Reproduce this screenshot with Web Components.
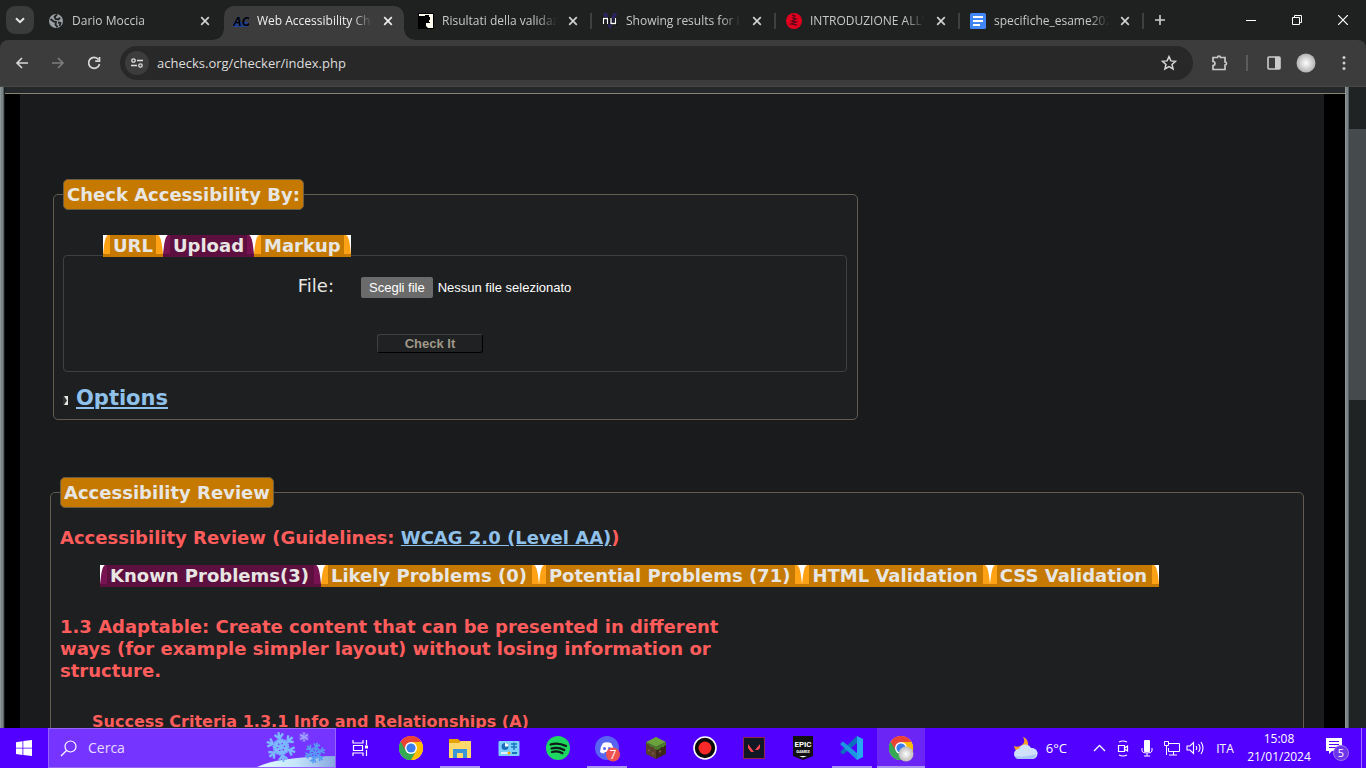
<!DOCTYPE html>
<html lang="it">
<head>
<meta charset="utf-8">
<title>Web Accessibility Checker</title>
<style>
html,body{margin:0;height:100%;overflow:hidden;background:#1a1b1c}
body{display:flex;flex-direction:column;font-family:"Open Sans","Noto Sans",sans-serif}
site-view{flex:1;min-height:0}
</style>
</head>
<body>
<browser-chrome></browser-chrome>
<site-view></site-view>
<task-bar></task-bar>

<script>
function define(name, html) {
  const t = document.createElement('template');
  t.innerHTML = html;
  customElements.define(name, class extends HTMLElement {
    constructor() {
      super();
      this.attachShadow({mode: 'open'}).append(t.content.cloneNode(true));
    }
  });
}

define('browser-tab', `
<style>
:host{display:flex;align-items:center;box-sizing:border-box;flex:0 1 184px;height:40px;padding:1px 11px 0 8px;color:#c7c9c9;font-size:12px;min-width:0}
a{flex:1;min-width:0;display:flex;align-items:center;gap:8px;color:inherit;text-decoration:none}
.t{flex:1;min-width:0;overflow:hidden;white-space:nowrap;line-height:18px;-webkit-mask-image:linear-gradient(90deg,#000 calc(100% - 20px),transparent);mask-image:linear-gradient(90deg,#000 calc(100% - 20px),transparent)}
::slotted(svg){width:16px;height:16px;flex:none;display:block}
button{border:0;background:none;padding:0;width:16px;height:16px;margin-left:8px;color:#d0d0d0;display:grid;place-items:center}
i{width:2px;height:16px;background:#3f4141;margin:0 -11px 0 9px}
:host(:not([sep])) i{visibility:hidden}
:host([sep]){padding-left:10px}
:host([active]){background:#3c3c3c;color:#e6e6e6;border-radius:10px 10px 0 0;height:34px;align-self:flex-end;flex-basis:180px;padding:0 8px 5px 9px;margin-right:4px;position:relative}
:host([active]) .t,:host([active]) button{color:#eee}
:host([active])::before,:host([active])::after{content:"";position:absolute;bottom:0;width:10px;height:10px}
:host([active])::before{left:-10px;background:radial-gradient(circle at 0 0,transparent 9px,#3c3c3c 10px)}
:host([active])::after{right:-10px;background:radial-gradient(circle at 100% 0,transparent 9px,#3c3c3c 10px)}
</style>
<a href="#"><slot name="icon"></slot><span class="t"><slot></slot></span></a>
<button aria-label="Chiudi scheda"><svg width="10" height="10" viewBox="0 0 10 10"><path d="M1.2 1.2l7.6 7.6M8.8 1.2L1.200 8.800" stroke="currentColor" stroke-width="1.7"/></svg></button><i></i>`);

define('browser-chrome', `
<style>
:host{display:block;background:#1f2120;color:#d5d5d5}
.strip{display:flex;height:40px;align-items:center}
.menu{width:28px;height:28px;margin:0 6px;border:0;border-radius:9px;background:#3a3b3b;padding:0;display:grid;place-items:center;flex:none}
.tabs{display:flex;flex:0 1 1106px;min-width:0;height:40px;align-items:center}
.plain{border:0;background:none;padding:0;display:grid;place-items:center;width:28px;height:28px;flex:none}
.win{margin-left:auto;display:flex}
.win .plain{width:46px;height:40px}
.bar{display:flex;align-items:center;background:#3c3c3c;height:46px;border-bottom:1px solid #484848;border-radius:8px 8px 0 0;padding:0 4px 0 8px}
.nav{display:flex;gap:8px}
form{flex:1;display:flex;align-items:center;background:#282828;border-radius:17px;height:34px;margin:0 12px;padding:0 10px 0 5px}
.site{background:#3c3c3c;border-radius:50%;width:24px;height:24px}
.url{position:relative;flex:1;margin-left:8px;font-size:13px;line-height:20px;white-space:nowrap}
.url input{all:unset;display:block;width:100%;color:#dedede}
hr{width:2px;height:16px;background:#5b5b5b;border:0;margin:0 12px}
.ext{display:flex;align-items:center;margin-left:1px}
.ext .w{width:36px}
.ext .w+.w{margin-left:2px}
</style>
<div class="strip">
<button class="menu" aria-label="Cerca schede"><svg width="10" height="7"><path d="M1 1.200l4 4 4-4" fill="none" stroke="#e6e6e6" stroke-width="2"/></svg></button>
<div class="tabs">
<browser-tab><svg slot="icon" viewBox="0 0 16 16"><circle cx="8" cy="8" r="7" fill="#9aa0a6"/><path d="M2.500 6l3 2.500 2.500.5-.5 2.500 2 2.800M9 1.500L6.500 4l1 2 3 .500 1.500-2M10 9.500l2.500.5-1 3" fill="none" stroke="#202222" stroke-width="1.800"/></svg>Dario Moccia</browser-tab>
<browser-tab active><svg slot="icon" viewBox="0 0 16 16"><rect x="0" y="9" width="15" height="5" fill="#23418f"/><text x="0" y="13" font-family="Liberation Sans" font-size="12" font-weight="700" font-style="italic" stroke="#1f3c8c" stroke-width=".5" paint-order="stroke">AC</text></svg>Web Accessibility Checker</browser-tab>
<browser-tab sep><svg slot="icon" viewBox="0 0 16 16"><path d="M0 0h16v16H0z"/><path d="M1 1h14v14h-5l-2-2V10h4V9h-1V7h1V4h-1V2H7v2H5V3H1z" fill="#fffdf0"/><path d="M4 3h3v2h3v3H8v2H4z"/></svg>Risultati della validazione</browser-tab>
<browser-tab sep><svg slot="icon" viewBox="0 0 16 16"><path d="M1 0h4l3 10 3-10h4l-5 13-2 3-2-3z" fill="#29245e"/><path d="M1.500 11V5.500h4V11M9 5v5.500h4.500V5" fill="none" stroke="#000" stroke-width="3"/><path d="M1.500 11V5.500h4V11M9 5v5.500h4.500V5" fill="none" stroke="#fff" stroke-width="1.300"/></svg>Showing results for index</browser-tab>
<browser-tab sep><svg slot="icon" viewBox="0 0 16 16"><circle cx="8" cy="8" r="8" fill="#e2001f"/><path d="M6 2l3 1-2 2 3 1-4 2 4 1-5 2 6 1" fill="none" stroke="#610817" stroke-width="1.400"/></svg>INTRODUZIONE ALL'INFORMATICA</browser-tab>
<browser-tab sep><svg slot="icon" viewBox="0 0 16 16"><rect width="16" height="16" rx="1.500" fill="#4285f4"/><path d="M3 4h10M3 8h10M3 12h7" stroke="#fff" stroke-width="1.800"/></svg>specifiche_esame2023_24</browser-tab>
</div>
<button class="plain" aria-label="Nuova scheda"><svg width="12" height="12"><path d="M6 1v10M1 6h10" stroke="#d0d0d0" stroke-width="1.600"/></svg></button>
<div class="win">
<button class="plain" aria-label="Riduci"><svg width="10" height="10"><path d="M0 5.500h10" stroke="#fff"/></svg></button>
<button class="plain" aria-label="Ripristina"><svg width="10" height="10"><path d="M.5 2.500h7v7h-7zM2.500 2V.5h7v7H8" fill="none" stroke="#fff"/></svg></button>
<button class="plain" aria-label="Chiudi"><svg width="10" height="10"><path d="M0 0l10 10M10 0L0 10" stroke="#fff" stroke-width="1.200"/></svg></button>
</div>
</div>
<div class="bar">
<div class="nav">
<button class="plain" aria-label="Indietro"><svg width="14" height="14"><path d="M13 7H2M7 2L2 7l5 5" fill="none" stroke="#d8d8d8" stroke-width="1.600"/></svg></button>
<button class="plain" aria-label="Avanti"><svg width="14" height="14"><path d="M1 7h11M7 2l5 5-5 5" fill="none" stroke="#7d7d7d" stroke-width="1.600"/></svg></button>
<button class="plain" aria-label="Ricarica"><svg width="14" height="14"><path d="M11.500 3.500A5.500 5.500 0 1 0 12.500 8M12.500 1v4.200H8.200" fill="none" stroke="#d8d8d8" stroke-width="1.700"/></svg></button>
</div>
<form>
<button type="button" class="plain site" aria-label="Informazioni sul sito"><svg width="12" height="10"><path d="M6 2.500h6M0 7.500h6" stroke="#ddd" stroke-width="1.500"/><circle cx="2.500" cy="2.500" r="1.700" fill="none" stroke="#ddd" stroke-width="1.300"/><circle cx="9.500" cy="7.500" r="1.700" fill="none" stroke="#ddd" stroke-width="1.300"/></svg></button>
<div class="url"><input aria-label="Indirizzo" value="achecks.org/checker/index.php"></div>
<button type="button" class="plain" aria-label="Preferiti"><svg width="16" height="16"><path d="M8 1.600l1.900 4.300 4.600.4-3.500 3.100 1.100 4.600L8 11.600 3.900 14 5 9.400 1.500 6.300l4.600-.4z" fill="none" stroke="#d5d5d5" stroke-width="1.500"/></svg></button>
</form>
<div class="ext">
<button class="plain" aria-label="Estensioni"><svg width="18" height="18"><path d="M2 3.500h4.500C6.500 1.500 9.500 1.500 9.500 3.500H14V8c2 0 2 3 0 3v4.500H2v-4c2.600 0 2.600-4 0-4z" fill="none" stroke="#c9c9c9" stroke-width="1.700"/></svg></button>
<hr>
<button class="plain" aria-label="Riquadro laterale"><svg width="14" height="14"><rect x="1" y="1" width="12" height="12" rx="1" fill="none" stroke="#ccc" stroke-width="1.600"/><path d="M8 1h5v12H8z" fill="#ccc"/></svg></button>
<button class="plain w" aria-label="Profilo"><svg width="20" height="20"><defs><radialGradient id="p"><stop offset="0" stop-color="#fff"/><stop offset="1" stop-color="#b2b2b2"/></radialGradient></defs><circle cx="10" cy="10" r="9.500" fill="url(#p)"/></svg></button>
<button class="plain w" aria-label="Menu"><svg width="4" height="16"><g fill="#ccc"><circle cx="2" cy="2.500" r="1.500"/><circle cx="2" cy="8" r="1.500"/><circle cx="2" cy="13.500" r="1.500"/></g></svg></button>
</div>
</div>`);

define('folder-tab', `
<style>
:host{--base:#c57900;--edge:#ffa114;display:block;height:22px;background:var(--base);position:relative}
:host([active]){--base:#5d0f40;--edge:#771350}
a{display:block;padding:0 var(--tab-end,10px) 0 10px;font:bold 18px/22px "DejaVu Sans",sans-serif;color:#e8e6e3;text-decoration:none;white-space:nowrap}
svg{position:absolute;top:0;width:7px;height:19px}
.l{left:0}.r{right:0;transform:scaleX(-1)}
.e{fill:var(--edge)}
</style>
<svg class="l" viewBox="0 0 7 19"><path d="M0 0h7v19H0z" fill="#fff"/><path class="e" d="M0 19C1 10 2 1 5 0h2v19z"/></svg>
<svg class="r" viewBox="0 0 7 19"><path d="M0 0h7v19H0z" fill="#fff"/><path class="e" d="M0 19C1 10 2 1 5 0h2v19z"/></svg>
<a href="#"><slot></slot></a>`);

define('field-group', `
<style>
:host{display:block}
fieldset{margin:0;min-width:0;border:1px solid #625b50;border-radius:5px;background:#1e1f21;padding:0 10px 8px 9px}
legend{box-sizing:border-box;height:31px;padding:0 3px;border:1px solid #6b5d45;border-radius:5px;background:#c57900;color:#e8e6e3;font:bold 18px/30px "DejaVu Sans",sans-serif}
</style>
<fieldset><legend><slot name="title"></slot></legend><slot></slot></fieldset>`);

define('upload-form', `
<style>
:host{display:block}
nav{display:flex;padding:25px 0 0 40px;margin-bottom:-2px;position:relative;z-index:1}
form{border:1px solid #3d4145;border-radius:4px;display:grid;grid-template-columns:270px 1fr;column-gap:27px;row-gap:36px;padding:21px 0 18px;align-items:center}
.lab{justify-self:end;font:18px/22px "DejaVu Sans",sans-serif;color:#e8e6e3;align-self:start;margin-top:-2px}
.file{display:flex;align-items:center;gap:5px;font:13px/21px "Liberation Sans",sans-serif;color:#fff;position:relative}
.file input{position:absolute;opacity:0;width:1px;height:1px}
.file label{background:#6b6b6b;border-radius:2px;padding:0 8px}
button{grid-column:2;margin-left:16px;justify-self:start;box-sizing:border-box;width:106px;height:19px;padding:0;border:1px solid;border-color:#3d4145 #000 #000 #3d4145;border-radius:3px;background:#1f2123;color:#a09889;font:bold 13px/15px "Liberation Sans",sans-serif}
.opt{display:flex;align-items:center;gap:8px;margin-top:13px}
.opt a{font:bold 21px/26px "DejaVu Sans",sans-serif;color:#8fc1ea}
.opt svg{margin-top:5px}
</style>
<nav><folder-tab>URL</folder-tab><folder-tab active>Upload</folder-tab><folder-tab>Markup</folder-tab></nav>
<form>
<label class="lab" for="f">File:</label>
<div class="file"><input id="f" type="file"><label for="f">Scegli file</label><span>Nessun file selezionato</span></div>
<button type="button">Check It</button>
</form>
<div class="opt"><svg width="5" height="9"><path d="M0 0h5v9H0z" fill="#e8e6e3"/><path d="M0 0h1l3 4.500L1 9H0z" fill="#333"/></svg><a href="#">Options</a></div>`);

define('review-panel', `
<style>
:host{display:block;font-family:"DejaVu Sans",sans-serif;color:#ff5c5c;--tab-end:12px}
h2,h3,h4{margin:0;font-size:18px;line-height:22px}
h2{margin-top:19px}
h2 a{color:#8fc1ea}
nav{display:flex;margin:16px 0 29px 40px}
h3{max-width:680px}
h4{font-size:16px;margin:29px 0 60px 32px}
</style>
<h2>Accessibility Review (Guidelines: <a href="#">WCAG 2.0 (Level AA)</a>)</h2>
<nav><folder-tab active>Known Problems(3)</folder-tab><folder-tab>Likely Problems (0)</folder-tab><folder-tab>Potential Problems (71)</folder-tab><folder-tab>HTML Validation</folder-tab><folder-tab>CSS Validation</folder-tab></nav>
<h3>1.3 Adaptable: Create content that can be presented in different ways (for example simpler layout) without losing information or structure.</h3>
<h4>Success Criteria 1.3.1 Info and Relationships (A)</h4>`);

define('site-view', `
<style>
:host{display:flex;overflow:hidden;background:#1a1b1c}
.edge{width:4px;flex:none;background:linear-gradient(90deg,#8b9496 0 1px,#7b8587 1px 3px,#536064 3px)}
.page{flex:1;min-width:0;background:#000;margin-left:1px}
.head{height:6px;background:#24282b;border-bottom:1px solid #8a8376}
main{background:#1a1b1c;margin:0 21px 0 15px;padding:85px 20px 0 30px}
.check{width:64.2%;margin:0 0 57px 3px}
.scroll{width:17px;flex:none;background:#202324;display:grid;grid-template-rows:42px 271px 1fr}
.scroll i{grid-row:2;background:#454a4c}
</style>
<div class="edge"></div>
<div class="page"><div class="head"></div>
<main>
<field-group class="check"><span slot="title">Check Accessibility By:</span><upload-form></upload-form></field-group>
<field-group><span slot="title">Accessibility Review</span><review-panel></review-panel></field-group>
</main></div>
<div class="edge"></div>
<div class="scroll"><i></i></div>`);

define('task-item', `
<style>
:host{display:block;width:48px;flex:none}
button{position:relative;display:grid;place-items:center;width:100%;height:40px;border:0;padding:0;background:none}
:host([open]) button::after{content:"";position:absolute;left:4px;right:4px;bottom:0;height:2px;background:#a795ef}
:host([active]) button{background:#6b25f4}
:host([active]) button::after{left:0;right:0}
::slotted(svg){display:block;width:24px;height:24px;overflow:visible}
</style>
<button><slot></slot></button>`);

const chromeLogo = `<circle cx="12" cy="12" r="12" fill="#fff"/><path d="M12 12L1.600 6A12 12 0 0 1 22.400 6z" fill="#ea4335"/><path d="M12 12L22.400 6A12 12 0 0 1 12 24z" fill="#fbbc04"/><path d="M12 12L12 24A12 12 0 0 1 1.600 6z" fill="#34a853"/><path d="M12 6h10.400A12 12 0 0 1 12 24l5-9z" fill="#fbbc04"/><path d="M1.600 6A12 12 0 0 1 22.400 6H12L6.800 15z" fill="#ea4335"/><path d="M1.600 6A12 12 0 0 0 12 24l5-9-10.200 0z" fill="#34a853"/><circle cx="12" cy="12" r="6" fill="#fff"/><circle cx="12" cy="12" r="4.600" fill="#3b7ded"/>`;
const arm = `<path d="M0 0V-14M-4-12L0-8L4-12M-3-7L0-4L3-7"/>`;
const flake = [0,60,120,180,240,300].map(a => `<g transform="rotate(${a})">${arm}</g>`).join('');

define('task-bar', `
<style>
:host{display:flex;height:40px;flex:none;background:#5200ff;color:#fff;font-size:12px;position:relative}
.search{box-sizing:border-box;flex:0 1 288px;min-width:120px;display:flex;align-items:center;gap:11px;background:#7534ff;border:1px solid #9563ff;padding-left:11px;overflow:hidden;position:relative}
.search input{all:unset;flex:1;min-width:0;font-size:14px;line-height:20px;color:#ece4ff}
.search input::placeholder{color:#e6dcff;opacity:1}
.art{position:absolute;right:0;bottom:0}
.view{margin-right:3px}
.apps{display:flex;gap:1px}
.tray{margin-left:auto;display:flex;align-items:center}
button{border:0;background:none;color:inherit;padding:0;font:inherit;display:flex;align-items:center;justify-content:center;height:40px}
.weather{gap:7px;font-size:13px;margin-right:20px}
.ic{width:24px}
.lang{width:36px}
.clock{width:72px;text-align:center;line-height:18px;white-space:nowrap;height:38px}
.note{width:44px;margin-right:2px}
.show{width:5px;border-left:1px solid #9a6cff}
</style>
<task-item><svg viewBox="0 0 24 24" aria-label="Start"><path d="M4 6.200l6.500-1v6.500H4zM11.300 5L20 4v7.700h-8.700zM4 12.400h6.500v6.500L4 18zM11.300 12.400H20V20l-8.700-1z" fill="#fff"/></svg></task-item>
<label class="search"><svg width="17" height="17"><circle cx="10.500" cy="6.500" r="5.500" fill="none" stroke="#fff" stroke-width="1.200"/><path d="M6.500 10.500L1 16" stroke="#fff" stroke-width="1.300"/></svg><input placeholder="Cerca" aria-label="Cerca">
<svg class="art" width="80" height="38" viewBox="0 0 80 38"><defs><linearGradient id="sn"><stop offset="0" stop-color="#e2fdff"/><stop offset=".5" stop-color="#c5e6fa"/><stop offset="1" stop-color="#86a8e0"/></linearGradient></defs><path d="M2 38Q22 28 80 27V38z" fill="url(#sn)"/><g fill="none" stroke="#7bb9ff" stroke-width="2.200"><g transform="translate(26 18) rotate(-10) scale(1.080)">${flake}<circle r="5"/></g><g transform="translate(60 24) rotate(12) scale(.76)" stroke="#579cf2">${flake}</g><g transform="translate(49 8) scale(.36)" stroke="#a3b1ff">${flake}</g></g></svg></label>
<task-item class="view"><svg viewBox="0 0 24 24"><path d="M5 4v3h10V4M5 20v-3h10v3M5.500 9.500h9v5h-9zM18.500 4v5M18.500 14v6" fill="none" stroke="#fff" stroke-width="1.200"/><path d="M17 9.500h3v3h-3z" fill="#fff"/></svg></task-item>
<div class="apps">
<task-item><svg viewBox="0 0 24 24">${chromeLogo}</svg></task-item>
<task-item open><svg viewBox="0 0 24 24"><path d="M1 3h9l2 2h11v17H1z" fill="#e5a300"/><path d="M1 7h10l2-2h10v17H1z" fill="#ffd86b"/><path d="M5 13h14v9h-4v-5H9v5H5z" fill="#3a94d9"/></svg></task-item>
<task-item><svg viewBox="0 0 24 24"><rect x="1.500" y="5" width="21" height="15" rx="1" fill="#7cd0fb"/><circle cx="8" cy="10.500" r="3.500" fill="#196fb9"/><path d="M8 10.500V7a3.500 3.500 0 0 1 3.500 3.500z" fill="#fff"/><path d="M14 8h6M14 11h6M17 6.500V14" stroke="#1a75c1" stroke-width="1.500"/><path d="M4 17h9" stroke="#fff" stroke-width="1.500"/><circle cx="12" cy="17" r="1.500" fill="#f6a500"/><path d="M15 17h5" stroke="#196fb9" stroke-width="2"/></svg></task-item>
<task-item><svg viewBox="0 0 24 24"><circle cx="12" cy="12" r="12" fill="#1ed760"/><path d="M4.500 8.500Q12 6 20 10M5.500 12.500q6.500-2 12.800 1.500M6 16q6-1.500 10.500 1.200" fill="none" stroke="#101a1a" stroke-width="2.200" stroke-linecap="round"/></svg></task-item>
<task-item open><svg viewBox="0 0 24 24"><circle cx="12" cy="12" r="12" fill="#5865f2"/><path d="M8 7q4-1.500 8 0 3 4 3 9-2 1.500-4 1.500l-1-1.500h-4l-1 1.500Q7 17.500 5 16q0-5 3-9z" fill="#fff"/><circle cx="9.500" cy="12.500" r="1.500" fill="#5865f2"/><circle cx="14.500" cy="12.500" r="1.500" fill="#5865f2"/><circle cx="18" cy="18.500" r="7" fill="#ed5250"/><text x="18" y="23" text-anchor="middle" font-family="Open Sans" font-size="12" fill="#fff">7</text></svg></task-item>
<task-item><svg viewBox="0 0 24 24"><path d="M12 1l10 5-10 5L2 6z" fill="#6aa33a"/><path d="M2 6l10 5v12L2 18z" fill="#59402c"/><path d="M22 6l-10 5v12l10-5z" fill="#3d291c"/><path d="M2 6l10 5 10-5v3l-2 1v1l-3 0-1 2-4 1-3-3-2 0-3-3-2 0z" fill="#4a7d28"/><path d="M4 13l2 1v2l-2-1zM8 16l2 1v2l-2-1zM15 15l2-1v2l-2 1z" fill="#7a5b40"/></svg></task-item>
<task-item><svg viewBox="0 0 24 24"><circle cx="12" cy="12" r="11" fill="#0b0b0b" stroke="#fff" stroke-width="1.600"/><circle cx="12" cy="12" r="6.500" fill="#f62828"/></svg></task-item>
<task-item><svg viewBox="0 0 24 24"><rect x="1.500" y="1.500" width="21" height="21" fill="#111823" stroke="#8f2850"/><path d="M6 8l6 8H9l-3-4zM18 8v4l-2 2h-3z" fill="#ff4655"/></svg></task-item>
<task-item><svg viewBox="0 0 24 24"><path d="M2 0h20v20l-10 4-10-4z" fill="#111"/><text x="12" y="11" text-anchor="middle" font-family="Roboto" font-size="8" font-weight="700" fill="#fff">EPIC</text><text x="12" y="17" text-anchor="middle" font-family="Roboto" font-size="4" font-weight="700" fill="#fff">GAMES</text><path d="M8 20h8l-4 1.500z" fill="#fff"/></svg></task-item>
<task-item open><svg viewBox="0 0 24 24"><path d="M17 0l6 3v18l-6 3z" fill="#25a9f2"/><path d="M17 0v7L3 18.500 0 16z" fill="#0a72bd"/><path d="M17 24v-7L3 5.500 0 8z" fill="#1b96e0"/></svg></task-item>
<task-item open active><svg viewBox="0 0 24 24">${chromeLogo}<defs><radialGradient id="q"><stop offset="0" stop-color="#fff"/><stop offset="1" stop-color="#bdb9b9"/></radialGradient></defs><circle cx="17" cy="18" r="7.500" fill="url(#q)"/></svg></task-item>
</div>
<div class="tray">
<button class="weather"><svg width="26" height="24"><path d="M10 1q3 5-1 8-4 3-8 1 1 6 7 6 8-1 7-9-1-5-5-6z" fill="#f7a029"/><path d="M6 23a5 5 0 0 1 0-10 6.500 6.500 0 0 1 12-1 5.500 5.500 0 0 1 2 11z" fill="#cfe0fa"/><path d="M2 20q8 2 21-2-1 5-4 5H6q-3 0-4-3z" fill="#a9c6f4"/></svg><span>6°C</span></button>
<button class="ic" aria-label="Icone nascoste"><svg width="13" height="8"><path d="M1 7l5.500-5.500L12 7" fill="none" stroke="#fff" stroke-width="1.300"/></svg></button>
<button class="ic" aria-label="Videocamera"><svg width="14" height="17"><path d="M3 2q4-2 8 0M3 15q4 2 8 0M2.500 5.500h6v6h-6zM8.500 8l3-2v5l-3-2" fill="none" stroke="#fff" stroke-width="1.200"/></svg></button>
<button class="ic" aria-label="Microfono"><svg width="12" height="17"><rect x="3" y="0" width="6" height="12" rx="1" fill="#fff"/><path d="M1 8v3q0 2 5 2t5-2V8M6 13v3M3 16h6" fill="none" stroke="#fff"/></svg></button>
<button class="ic" aria-label="Rete"><svg width="17" height="15"><path d="M6 2.500h10.500v8H5.500V7M10.500 11v3M6 14h8M1.500.5h4v4h-4zM3.500 5v9" fill="none" stroke="#fff"/></svg></button>
<button class="ic" aria-label="Volume"><svg width="18" height="14"><path d="M1 5h3l3.500-3.500v11L4 9H1zM10 5q1.500 2 0 4M12.500 3q3 4 0 8M15 1q4 6 0 12" fill="none" stroke="#fff" stroke-width="1.100"/></svg></button>
<button class="lang">ITA</button>
<button class="clock"><span>15:08<br>21/01/2024</span></button>
<button class="note" aria-label="Notifiche"><svg width="26" height="25"><path d="M2 2h16v13H8l-3 3v-3H2z" fill="#fff"/><path d="M5 5.500h10M5 8.500h10M5 11.500h8" stroke="#5200ff"/><circle cx="17" cy="17" r="7.500" fill="#6f35e8" stroke="#9a77e8"/><text x="17" y="21" text-anchor="middle" font-family="Open Sans" font-size="11" fill="#fff">5</text></svg></button>
<button class="show" aria-label="Mostra desktop"></button>
</div>`);
</script>
</body>
</html>
